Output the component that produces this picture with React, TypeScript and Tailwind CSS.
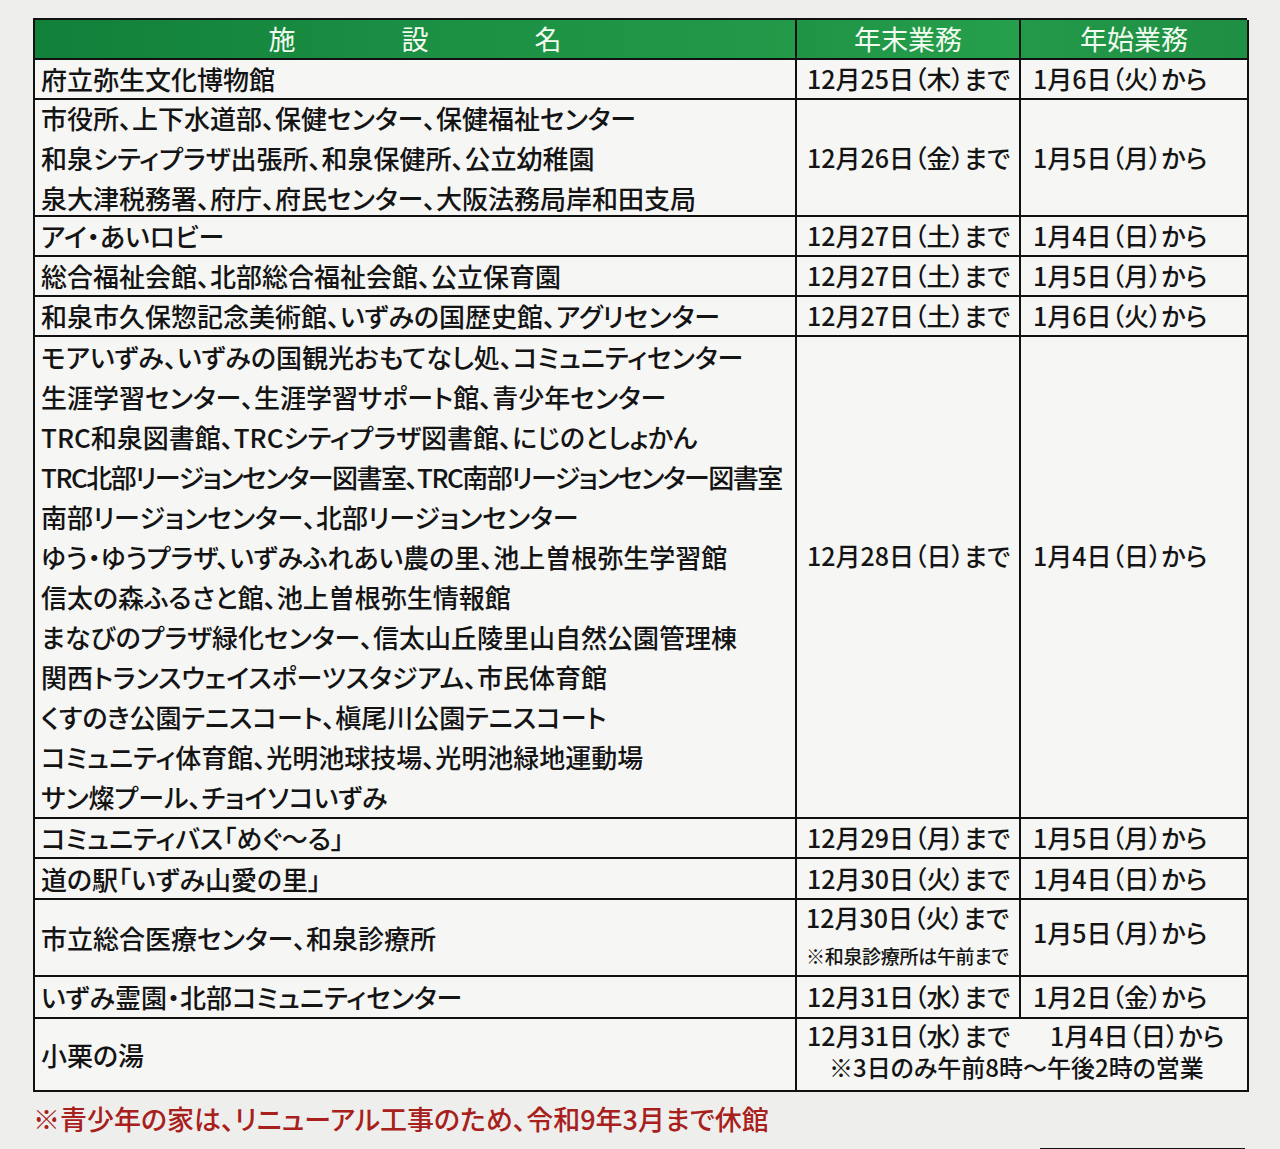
import React from "react";

type Row = {
  names: string[];
  end: string;
  start: string;
  h: string;
  shift?: string;
};

const rows: Row[] = [
  { names: ["府立弥生文化博物館"], end: "12月25日（木）まで", start: "1月6日（火）から", h: "h-[40px]" },
  {
    names: [
      "市役所、上下水道部、保健センター、保健福祉センター",
      "和泉シティプラザ出張所、和泉保健所、公立幼稚園",
      "泉大津税務署、府庁、府民センター、大阪法務局岸和田支局",
    ],
    end: "12月26日（金）まで",
    start: "1月5日（月）から",
    h: "h-[117px]",
  },
  { names: ["アイ・あいロビー"], end: "12月27日（土）まで", start: "1月4日（日）から", h: "h-[40px]" },
  { names: ["総合福祉会館、北部総合福祉会館、公立保育園"], end: "12月27日（土）まで", start: "1月5日（月）から", h: "h-[40px]" },
  { names: ["和泉市久保惣記念美術館、いずみの国歴史館、アグリセンター"], end: "12月27日（土）まで", start: "1月6日（火）から", h: "h-[40px]" },
  {
    names: [
      "モアいずみ、いずみの国観光おもてなし処、コミュニティセンター",
      "生涯学習センター、生涯学習サポート館、青少年センター",
      "TRC和泉図書館、TRCシティプラザ図書館、にじのとしょかん",
      "TRC北部リージョンセンター図書室、TRC南部リージョンセンター図書室",
      "南部リージョンセンター、北部リージョンセンター",
      "ゆう・ゆうプラザ、いずみふれあい農の里、池上曽根弥生学習館",
      "信太の森ふるさと館、池上曽根弥生情報館",
      "まなびのプラザ緑化センター、信太山丘陵里山自然公園管理棟",
      "関西トランスウェイスポーツスタジアム、市民体育館",
      "くすのき公園テニスコート、槇尾川公園テニスコート",
      "コミュニティ体育館、光明池球技場、光明池緑地運動場",
      "サン燦プール、チョイソコいずみ",
    ],
    end: "12月28日（日）まで",
    start: "1月4日（日）から",
    h: "h-[482px]",
    shift: "pb-[42px]",
  },
  { names: ["コミュニティバス「めぐ〜る」"], end: "12月29日（月）まで", start: "1月5日（月）から", h: "h-[40px]" },
  { names: ["道の駅「いずみ山愛の里」"], end: "12月30日（火）まで", start: "1月4日（日）から", h: "h-[41px]" },
  { names: ["いずみ霊園・北部コミュニティセンター"], end: "12月31日（水）まで", start: "1月2日（金）から", h: "h-[42px]" },
];

const cell = "border-r-2 border-b-2 border-[#111] bg-[#f6f6f4]";
const head = "flex h-[40px] items-center justify-center border-r-2 border-b-2 border-[#111] text-[27px] text-[#f2fbef]";

function NameCell({ names, h }: { names: string[]; h: string }) {
  return (
    <div className={`${cell} ${h} flex flex-col justify-center pl-[6px] text-[26px] leading-[40px] font-medium`}>
      {names.map((n) => (
        <div key={n} className={n.startsWith("TRC北部") ? "whitespace-nowrap tracking-[-1.5px]" : "whitespace-nowrap"}>
          {n}
        </div>
      ))}
    </div>
  );
}

export default function App() {
  const [before, after] = [rows.slice(0, 8), rows.slice(8)];

  const renderRow = (r: Row, i: number) => (
    <React.Fragment key={i}>
      <NameCell names={r.names} h={r.h} />
      <div className={`${cell} ${r.h} ${r.shift ?? ""} flex items-center pl-[10px] text-[25px] font-medium whitespace-nowrap`}>
        {r.end}
      </div>
      <div className={`${cell} ${r.h} ${r.shift ?? ""} flex items-center pl-[12px] text-[25px] font-medium whitespace-nowrap`}>
        {r.start}
      </div>
    </React.Fragment>
  );

  return (
    <div className="min-h-[1149px] w-[1280px] bg-[#eeeeec] pt-[18px] pl-[33px] text-[#141414] [font-family:'Noto_Sans_CJK_JP','Noto_Sans',sans-serif] [font-feature-settings:'palt']">
      <div className="grid w-[1214px] grid-cols-[762px_224px_228px] border-t-2 border-l-2 border-[#111]">
        {/* header */}
        <div className={`${head} gap-[106px] bg-gradient-to-r from-[#11803a] via-[#1b8f43] to-[#229a48]`}>
          <span>施</span>
          <span>設</span>
          <span>名</span>
        </div>
        <div className={`${head} bg-gradient-to-r from-[#1f9445] to-[#26a04c]`}>年末業務</div>
        <div className={`${head} bg-gradient-to-r from-[#23994a] to-[#1f8f43]`}>年始業務</div>

        {before.map(renderRow)}

        {/* 市立総合医療センター */}
        <NameCell names={["市立総合医療センター、和泉診療所"]} h="h-[77px]" />
        <div className={`${cell} flex h-[77px] flex-col pl-[9px] font-medium whitespace-nowrap`}>
          <div className="text-[25px] leading-[34px]">12月30日（火）まで</div>
          <div className="mt-[8px] text-[19px] leading-[28px] tracking-[-0.3px]">※和泉診療所は午前まで</div>
        </div>
        <div className={`${cell} flex h-[77px] items-center pb-[10px] pl-[12px] text-[25px] font-medium whitespace-nowrap`}>
          1月5日（月）から
        </div>

        {after.map(renderRow)}

        {/* 小栗の湯 */}
        <NameCell names={["小栗の湯"]} h="h-[73px]" />
        <div className={`${cell} col-span-2 flex h-[73px] flex-col font-medium whitespace-nowrap`}>
          <div className="flex text-[25px] leading-[32px]">
            <span className="w-[253px] pl-[10px]">12月31日（水）まで</span>
            <span>1月4日（日）から</span>
          </div>
          <div className="pl-[32px] text-[24px] leading-[32px]">※3日のみ午前8時〜午後2時の営業</div>
        </div>
      </div>

      <p className="mt-[10px] text-[27px] leading-[34px] font-medium text-[#a8201c]">
        ※青少年の家は、リニューアル工事のため、令和9年3月まで休館
      </p>

      <div className="mt-[12px] ml-[1007px] h-[4px] w-[205px] bg-[#111]" />
    </div>
  );
}
